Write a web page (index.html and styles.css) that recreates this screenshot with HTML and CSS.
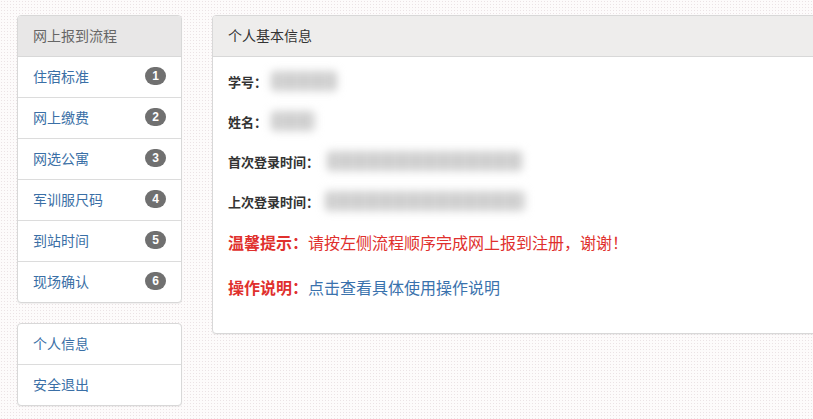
FILE: index.html
```html
<!DOCTYPE html>
<html lang="zh-CN">
<head>
    <meta charset="UTF-8">
    <title>网上报到</title>
    <link rel="stylesheet" href="styles.css">
</head>
<body>
    <div class="page">
        <div class="sidebar">
            <div class="panel">
                <div class="panel-heading side-heading">网上报到流程</div>
                <a class="list-item" href="#">住宿标准 <span class="badge">1</span></a>
                <a class="list-item" href="#">网上缴费 <span class="badge">2</span></a>
                <a class="list-item" href="#">网选公寓 <span class="badge">3</span></a>
                <a class="list-item" href="#">军训服尺码 <span class="badge">4</span></a>
                <a class="list-item" href="#">到站时间 <span class="badge">5</span></a>
                <a class="list-item" href="#">现场确认 <span class="badge">6</span></a>
            </div>
            <div class="panel">
                <a class="list-item" href="#">个人信息</a>
                <a class="list-item" href="#">安全退出</a>
            </div>
        </div>

        <div class="panel main-panel">
            <div class="panel-heading">个人基本信息</div>
            <div class="panel-body">
                <div class="info-row"><b>学号：</b><span class="blur blur-id"></span></div>
                <div class="info-row"><b>姓名：</b><span class="blur blur-name"></span></div>
                <div class="info-row"><b>首次登录时间：</b><span class="blur blur-time"></span></div>
                <div class="info-row"><b>上次登录时间：</b><span class="blur blur-time2"></span></div>
                <div class="tip-row"><b>温馨提示：</b>请按左侧流程顺序完成网上报到注册，谢谢！</div>
                <div class="tip-row"><b>操作说明：</b><a href="#">点击查看具体使用操作说明</a></div>
            </div>
        </div>
    </div>
</body>
</html>
```

FILE: styles.css
```css
html, body {
    overflow: hidden;
}

body {
    margin: 0;
    padding: 15px 17px;
    font-family: "Microsoft YaHei", "Noto Sans CJK SC", sans-serif;
    font-size: 14px;
    color: #333;
    background-color: #fdfbfb;
    background-image: radial-gradient(#ebe3e5 0.8px, transparent 0.9px);
    background-size: 3px 3px;
}

.page {
    display: flex;
    align-items: flex-start;
    gap: 30px;
    width: 1100px;
}

.sidebar {
    width: 165px;
    display: flex;
    flex-direction: column;
    gap: 20px;
}

.panel {
    background: #fff;
    border: 1px solid #d8d8d8;
    border-radius: 4px;
    box-shadow: 0 1px 1px rgba(0, 0, 0, 0.05);
    overflow: hidden;
}

.panel-heading {
    padding: 9px 15px 11px;
    line-height: 20px;
    background: #eeedec;
    border-bottom: 1px solid #d8d8d8;
    color: #333;
}

.side-heading {
    background: #e8e7e7;
    color: #666;
}

.list-item {
    display: flex;
    justify-content: space-between;
    align-items: center;
    padding: 9px 15px 11px;
    line-height: 20px;
    color: #3a6fa6;
    text-decoration: none;
    border-bottom: 1px solid #dcdcdc;
}

.list-item:last-child {
    border-bottom: none;
}

.badge {
    display: inline-block;
    min-width: 7px;
    padding: 2px 7px;
    font-family: "Liberation Sans", Arial, sans-serif;
    font-size: 12px;
    font-weight: bold;
    line-height: 14px;
    color: #fff;
    text-align: center;
    background: #707070;
    border-radius: 10px;
}

.main-panel {
    width: 700px;
}

.panel-body {
    padding: 10px 15px 31px;
}

.info-row {
    display: flex;
    align-items: center;
    height: 28px;
    margin-bottom: 12px;
    font-size: 13px;
    color: #333;
}

.blur {
    display: inline-block;
    height: 20px;
    background: repeating-linear-gradient(90deg, #cdcdcd 0 10px, #dadada 10px 14px);
    filter: blur(4px);
    border-radius: 4px;
}

.blur-id {
    width: 66px;
    margin-left: 4px;
}

.blur-name {
    width: 44px;
    margin-left: 4px;
}

.blur-time {
    width: 196px;
    margin-left: 8px;
}

.blur-time2 {
    width: 200px;
    margin-left: 6px;
}

.tip-row {
    display: flex;
    align-items: center;
    height: 30px;
    margin-bottom: 15px;
    font-size: 16px;
    color: #e0302d;
}

.tip-row:last-child {
    margin-bottom: 0;
}

.tip-row a {
    color: #3a72ad;
    text-decoration: none;
}
```
